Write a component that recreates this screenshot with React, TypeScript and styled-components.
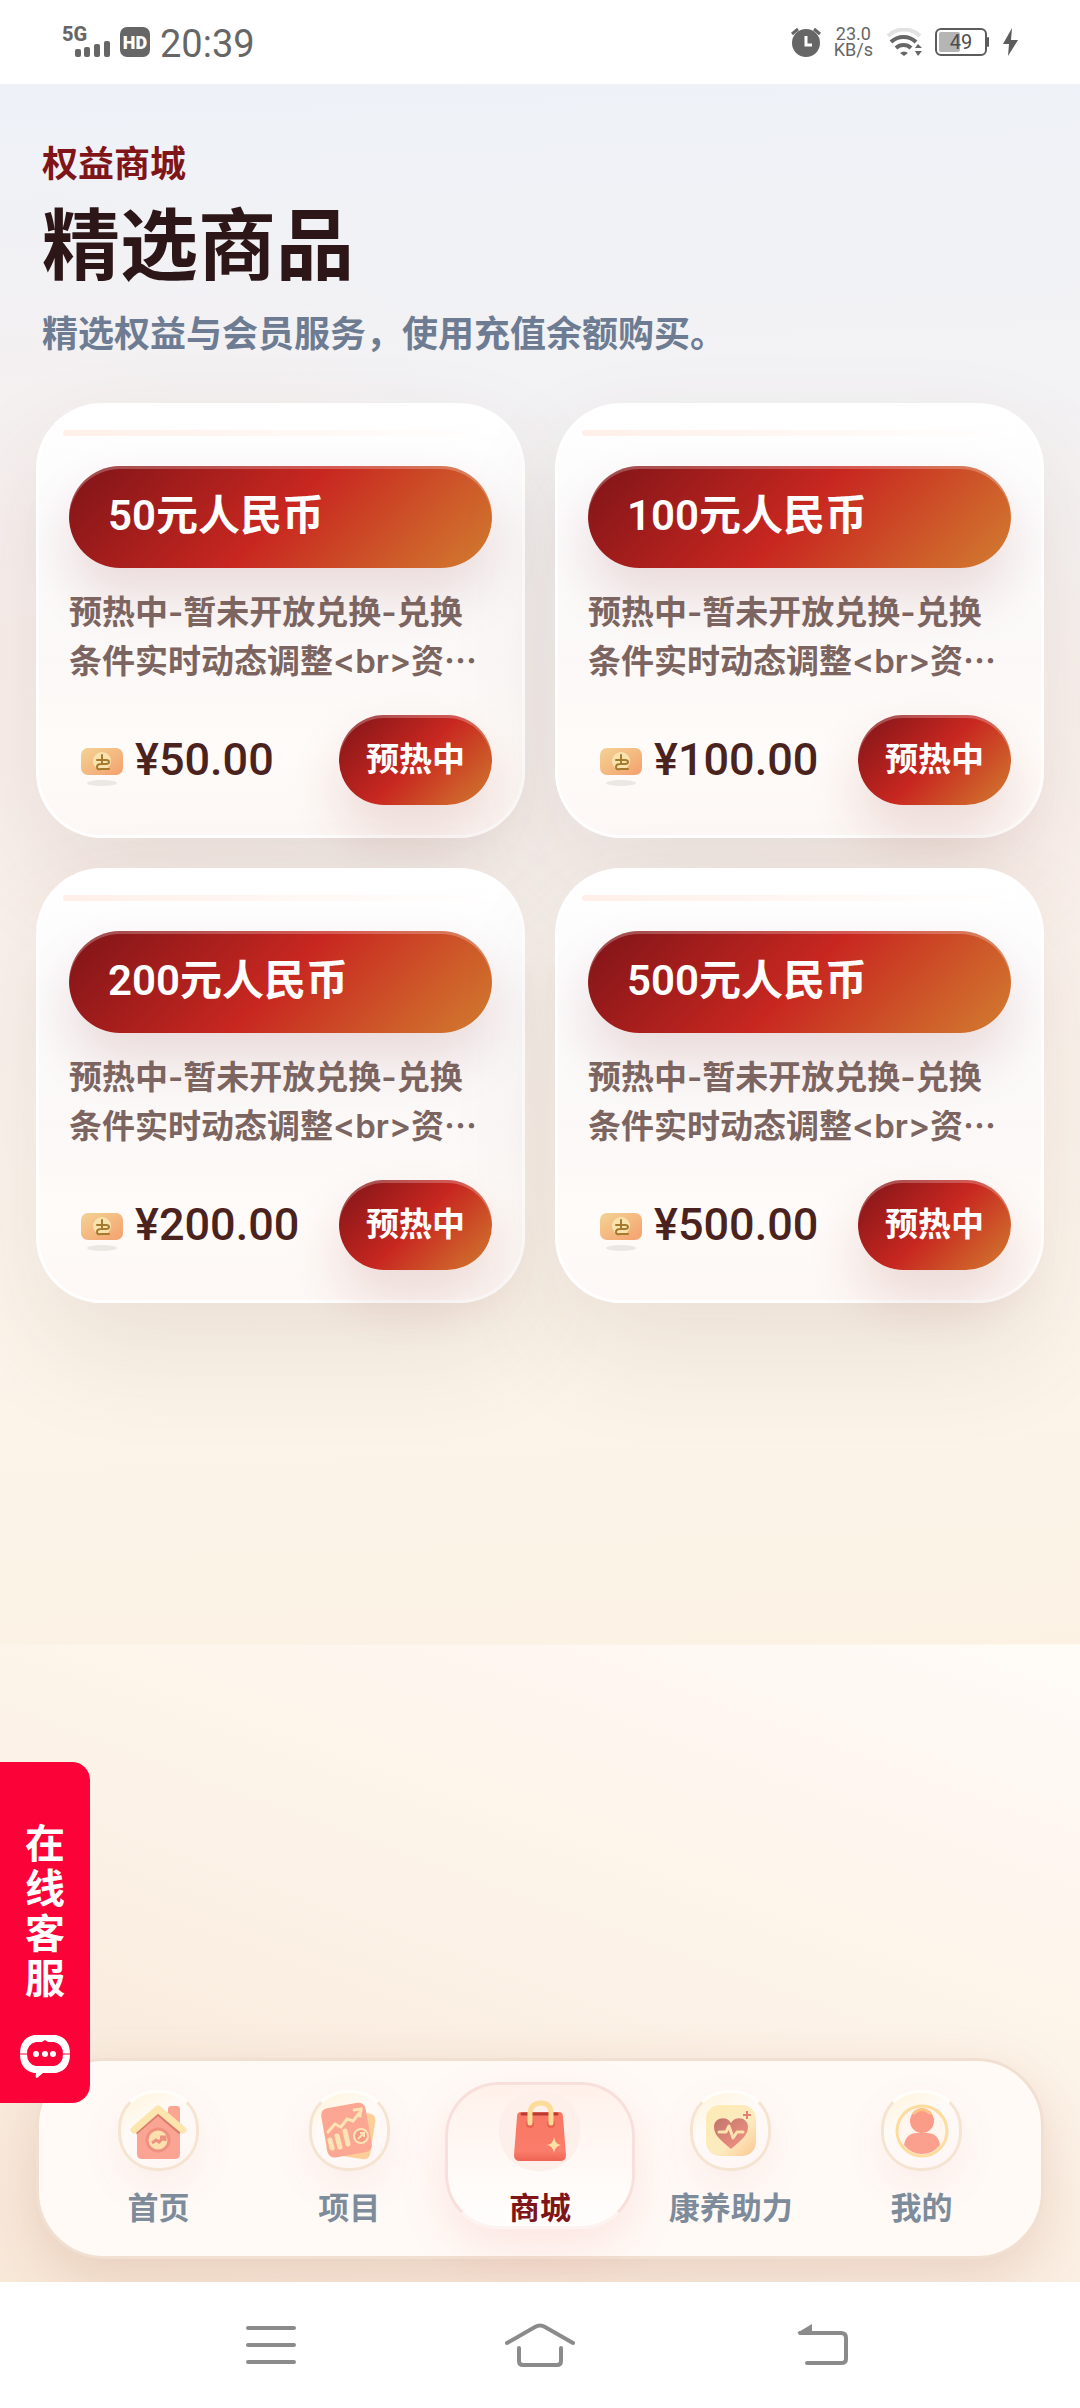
import React from 'react';
import styled, { createGlobalStyle, css } from 'styled-components';

const SANS = `Roboto, 'Noto Sans CJK SC', sans-serif`;
const BODY = `Inter, 'Noto Sans CJK SC', sans-serif`;
const CJK = `'Noto Sans CJK SC', sans-serif`;

const Global = createGlobalStyle`
  * { box-sizing: border-box; }
  body { margin: 0; background: #fff; font-family: ${SANS}; }
  h1, h2, p, ul { margin: 0; padding: 0; }
  button { font-family: inherit; border: 0; background: none; padding: 0; cursor: pointer; }
  a { text-decoration: none; }
  svg { display: block; flex: none; }
`;

const Screen = styled.div`
  min-height: 100vh;
  display: flex;
  flex-direction: column;
`;

/* ---------- status bar ---------- */

const StatusBar = styled.header`
  height: 84px;
  padding: 0 62px;
  display: flex;
  align-items: center;
  justify-content: space-between;
  color: #666;
`;

const StatusGroup = styled.div<{ $gap: number }>`
  display: flex;
  align-items: center;
  gap: ${(p) => p.$gap}px;
`;

const Clock = styled.time`
  font-size: 38px;
  line-height: 44px;
  padding-top: 4px;
`;

const NetSpeed = styled.div`
  display: flex;
  flex-direction: column;
  align-items: center;
  font-size: 18px;
  line-height: 16px;
`;

/* ---------- page ---------- */

const Main = styled.main`
  flex: 1;
  position: relative;
  display: flex;
  flex-direction: column;
  overflow: hidden;
  background:
    radial-gradient(ellipse 50% 24% at 0% 26%, rgba(255, 230, 222, 0.3), rgba(255, 230, 222, 0)) no-repeat,
    radial-gradient(ellipse 50% 20% at 100% 34%, rgba(255, 236, 228, 0.3), rgba(255, 236, 228, 0)) no-repeat,
    linear-gradient(178deg, #eef2f8 0%, #f3f2f4 20%, #f8f2ef 48%, #fcf5ec 75%, #fbf2e4 100%) top / 100% 71% no-repeat,
    linear-gradient(200deg, #fffcf8 60%, #fff6f1 68%, #fdf4e9 76%, #faede0 88%, #f8e8d8 100%);
`;

const Heading = styled.section`
  padding: 55px 42px 0;
  display: flex;
  flex-direction: column;
`;

const Eyebrow = styled.p`
  font-size: 36px;
  line-height: 52px;
  font-weight: 700;
  color: #7f1518;
`;

const Title = styled.h1`
  margin-top: 3px;
  font-size: 78px;
  line-height: 108px;
  font-weight: 700;
  color: #2c1618;
`;

const Lead = styled.p`
  font-size: 36px;
  line-height: 52px;
  margin-top: 7px;
  font-weight: 700;
  color: #6d7c92;
`;

const Goods = styled.ul`
  list-style: none;
  margin-top: 42px;
  padding: 0 36px;
  display: grid;
  grid-template-columns: 1fr 1fr;
  gap: 30px;
`;

const Card = styled.li`
  position: relative;
  padding: 60px 30px 30px;
  border: 3px solid rgba(255, 255, 255, 0.85);
  border-radius: 66px;
  background: linear-gradient(180deg, #ffffff 0%, #fcfbfc 26%, #fbf8f7 60%, #fffbf8 80%, #fdf8f5 100%);
  box-shadow: 0 48px 108px rgba(100, 60, 50, 0.11);

  &::before {
    content: '';
    position: absolute;
    top: 24px;
    left: 24px;
    right: 24px;
    height: 6px;
    border-radius: 3px;
    background: linear-gradient(90deg, #ffefe8, #fff8f4 55%, #ffffff);
  }
`;

const brandFill = css`
  background: linear-gradient(135deg, #7f1418 0%, #c82720 50%, #d27d30 100%);
  color: #fff;
  border-radius: 51px;
`;

const CardTitle = styled.h2`
  ${brandFill}
  padding: 20px 39px 22px;
  font-size: 42px;
  line-height: 60px;
  font-weight: 600;
  box-shadow: 0 27px 54px rgba(127, 20, 24, 0.14), inset 0 3px 0 rgba(255, 255, 255, 0.24);
`;

const Description = styled.p`
  margin: 20px 0 29px;
  font-family: ${BODY};
  font-size: 33px;
  line-height: 49px;
  font-weight: 600;
  color: #7c6560;
  word-break: break-all;
`;

const Ellipsis = styled.span`
  font-family: ${CJK};
  line-height: 1;
`;

const CardFooter = styled.div`
  display: flex;
  align-items: center;
  justify-content: space-between;
`;

const Price = styled.div`
  display: flex;
  align-items: center;
  gap: 12px;
  padding-left: 12px;
  font-size: 45px;
  line-height: 54px;
  font-weight: 500;
  color: #4a231f;
`;

const Buy = styled.button`
  ${brandFill}
  height: 90px;
  padding: 0 27px;
  border-radius: 45px;
  font-size: 33px;
  line-height: 48px;
  font-weight: 700;
  box-shadow: 0 27px 54px rgba(127, 20, 24, 0.14), inset 0 3px 0 rgba(255, 255, 255, 0.24);
`;

/* ---------- floating support tab ---------- */

const Support = styled.button`
  position: absolute;
  left: 0;
  bottom: 179px;
  z-index: 2;
  width: 90px;
  padding: 60px 0 24px;
  display: flex;
  flex-direction: column;
  align-items: center;
  gap: 33px;
  border-radius: 0 18px 18px 0;
  background: #fb0239;
  color: #fff;
`;

const SupportText = styled.span`
  width: 40px;
  font-size: 40px;
  line-height: 45px;
  font-weight: 700;
  word-break: break-all;
`;

/* ---------- tab bar ---------- */

const TabBar = styled.nav`
  margin: auto 36px 23px;
  padding: 21px 24px 27px;
  display: grid;
  grid-template-columns: repeat(5, 1fr);
  border: 3px solid #f1e0d1;
  border-radius: 68px;
  background: #fffaf6;
  box-shadow: 0 18px 54px rgba(150, 60, 40, 0.16);
`;

const Tab = styled.a<{ $active?: boolean }>`
  height: 147px;
  padding-top: 5px;
  display: flex;
  flex-direction: column;
  align-items: center;
  gap: 21px;
  border: 3px solid transparent;
  border-radius: 54px;
  font-size: 31px;
  line-height: 34px;
  font-weight: 700;
  white-space: nowrap;
  color: #7d8b9b;
  ${(p) =>
    p.$active &&
    css`
      color: #7f1518;
      border-color: #f8dfdb;
      border-bottom-color: #fdf3f0;
      background: linear-gradient(180deg, #fff1ea, #fffaf7 60%, #fffefd);
      box-shadow: 0 18px 48px rgba(230, 90, 90, 0.13);
    `}
`;

const TabIcon = styled.span<{ $active?: boolean }>`
  width: 81px;
  height: 81px;
  flex: none;
  display: grid;
  place-items: center;
  border-radius: 38px;
  ${(p) =>
    p.$active
      ? css`
          background: #fdefea;
        `
      : css`
          border: 3px solid #f4e4d1;
          border-top-color: #fffdfa;
          background: linear-gradient(150deg, #fff5d8 0%, #fefaf8 38%, #fdf5f3 100%);
          box-shadow: 0 15px 42px rgba(200, 80, 90, 0.08);
        `}
`;

/* ---------- system navigation ---------- */

const SystemNav = styled.footer`
  height: 126px;
  padding: 0 230px;
  display: flex;
  align-items: center;
  justify-content: space-between;
`;

const SystemButton = styled.button`
  width: 82px;
  height: 80px;
  display: grid;
  place-items: center;
`;

/* ---------- drawings ---------- */

const SignalIcon = () => (
  <svg width="48" height="46" viewBox="0 -8 48 46" fill="#666">
    <text x="0" y="14" fontFamily="Roboto, sans-serif" fontWeight="800" fontSize="20">5G</text>
    <rect x="13" y="22" width="6" height="8" rx="2" />
    <rect x="22" y="20" width="6" height="10" rx="2" />
    <rect x="32" y="17" width="6" height="13" rx="2" />
    <rect x="42" y="14" width="6" height="16" rx="2" />
  </svg>
);

const HdIcon = () => (
  <svg width="30" height="30" viewBox="0 0 30 30">
    <rect width="30" height="30" rx="7" fill="#666" />
    <text x="15" y="22" textAnchor="middle" fontFamily="Roboto, sans-serif" fontWeight="900" fontSize="18" fill="#fff">HD</text>
  </svg>
);

const AlarmIcon = () => (
  <svg width="30" height="30" viewBox="0 0 30 30">
    <circle cx="15" cy="16" r="14" fill="#666" />
    <path d="M1 7l6-5M29 7l-6-5" stroke="#666" strokeWidth="3" fill="none" />
    <path d="M15 9v9h6" stroke="#fff" strokeWidth="3" fill="none" />
  </svg>
);

const WifiIcon = () => (
  <svg width="36" height="28" viewBox="0 0 36 28" fill="none" strokeWidth="4">
    <path d="M2 8a23 23 0 0 1 32 0" stroke="#e2e2e2" />
    <path d="M5 14a18 18 0 0 1 25 0" stroke="#666" />
    <path d="M10 20a11 11 0 0 1 15 0" stroke="#666" />
    <path d="M14 25q4-3 8 0l-4 3z" fill="#666" />
    <path d="M29 20l3-4 4 4zM29 23h7l-4 5z" fill="#666" />
  </svg>
);

const BatteryIcon = () => (
  <svg width="55" height="28" viewBox="0 0 55 28">
    <rect x="1" y="1" width="50" height="26" rx="5" fill="none" stroke="#5c5c5c" strokeWidth="2" />
    <rect x="4" y="4" width="21" height="20" rx="2" fill="#b5b5b5" />
    <rect x="52" y="9" width="2" height="10" rx="1" fill="#5c5c5c" />
    <text x="26" y="21" textAnchor="middle" fontFamily="Roboto, sans-serif" fontSize="20" fill="#4c4c4c">49</text>
  </svg>
);

const BoltIcon = () => (
  <svg width="15" height="28" viewBox="0 0 15 28">
    <path d="M9 0L0 16h6L5 28l10-16H8z" fill="#5c5c5c" />
  </svg>
);

const CoinIcon = () => (
  <svg width="42" height="54" viewBox="0 0 42 54">
    <defs>
      <linearGradient id="note" x1="0" y1="0" x2="1" y2="1">
        <stop offset="0" stopColor="#f3d394" />
        <stop offset="1" stopColor="#f5a06e" />
      </linearGradient>
    </defs>
    <ellipse cx="21" cy="50" rx="15" ry="3" fill="#ebe7e3" />
    <rect x="0" y="15" width="42" height="27" rx="7" fill="url(#note)" />
    <circle cx="21" cy="28" r="9" fill="#f8e3ae" />
    <path d="M16 27h9q3 0 3 2t-3 2h-5q-4 0-4 3t4 2h8M21 22v9" fill="none" stroke="#a5792e" strokeWidth="2" strokeLinecap="round" strokeLinejoin="round" />
  </svg>
);

const ChatIcon = () => (
  <svg width="52" height="44" viewBox="0 0 52 44">
    <path d="M15 0h22q14 3 14 19 0 16-14 19H24l-6 5q-2 0-1-5h-2Q1 35 1 19 1 3 15 0z" fill="#fff" />
    <path d="M17 7h6l3-2 3 2h6q9 2 9 12t-9 12H17Q8 29 8 19T17 7z" fill="#fb0239" />
    <path d="M0 19h8M44 19h8" stroke="#fb0239" strokeWidth="1" />
    <circle cx="17" cy="19" r="3" fill="#fff" />
    <circle cx="26" cy="19" r="3" fill="#fff" />
    <circle cx="34" cy="19" r="3" fill="#fff" />
  </svg>
);

const HomeIcon = () => (
  <svg width="60" height="60" viewBox="0 0 60 60">
    <rect x="40" y="5" width="12" height="22" rx="3" fill="#fca592" />
    <path d="M9 29L30 9l22 20v24q0 5-5 5H14q-5 0-5-5z" fill="#fba494" />
    <path d="M8 32L30 13l22 19" fill="none" stroke="#d97d6c" strokeWidth="3" strokeLinejoin="round" />
    <path d="M6 29L30 8l25 21" fill="none" stroke="#fde5ae" strokeWidth="7" strokeLinecap="round" strokeLinejoin="round" />
    <circle cx="30" cy="39" r="11" fill="#fde0ad" stroke="#ee9180" strokeWidth="3" />
    <path d="M24 42l4-3 3 2 5-5M32 36h5v4" fill="none" stroke="#ee9180" strokeWidth="3" />
  </svg>
);

const ProjectIcon = () => (
  <svg width="60" height="62" viewBox="0 0 60 62">
    <rect x="10" y="11" width="44" height="46" rx="6" fill="#fdcf98" transform="rotate(9 32 34)" />
    <rect x="5" y="5" width="45" height="50" rx="7" fill="#fca793" transform="rotate(-10 28 30)" />
    <path d="M9 32l7-8 6 3 6-8 6 2 8-10M35 10l7-1-1 7" fill="none" stroke="#fde4b4" strokeWidth="3" strokeLinecap="round" />
    <path d="M11 40l2 8M18 36l3 11M26 31l3 13" stroke="#fde4b4" strokeWidth="5" strokeLinecap="round" />
    <circle cx="42" cy="36" r="7" fill="#f59a85" stroke="#fde4b4" strokeWidth="2" />
    <path d="M39 39l5-5M41 33h4v4" fill="none" stroke="#fde4b4" strokeWidth="2" />
  </svg>
);

const BagIcon = () => (
  <svg width="54" height="62" viewBox="0 0 54 62">
    <defs>
      <linearGradient id="bag" x1="0" y1="0" x2="0" y2="1">
        <stop offset="0" stopColor="#f97664" />
        <stop offset="0.8" stopColor="#fb7d6b" />
        <stop offset="1" stopColor="#ee6253" />
      </linearGradient>
    </defs>
    <path d="M8 12h38q4 0 4 5l3 38q0 6-6 6H7q-6 0-6-6l3-38q0-5 4-5z" fill="url(#bag)" />
    <path d="M9 14h35" stroke="#b83b34" strokeWidth="3" strokeLinecap="round" />
    <circle cx="17" cy="24" r="4" fill="#e9604f" />
    <circle cx="38" cy="24" r="4" fill="#e9604f" />
    <path d="M17 23V13q1-10 11-10t10 10v10" fill="none" stroke="#fbdc98" strokeWidth="5" strokeLinecap="round" />
    <path d="M41 37q1 7 7 8-6 1-7 8-1-7-7-8 6-1 7-8z" fill="#fde0a4" />
  </svg>
);

const HealthIcon = () => (
  <svg width="54" height="54" viewBox="0 0 54 54">
    <defs>
      <linearGradient id="tile" x1="0" y1="0" x2="1" y2="1">
        <stop offset="0" stopColor="#fdeab4" />
        <stop offset="0.6" stopColor="#fcebbf" />
        <stop offset="1" stopColor="#fdc692" />
      </linearGradient>
      <linearGradient id="heart" x1="0" y1="0" x2="1" y2="1">
        <stop offset="0" stopColor="#c0756b" />
        <stop offset="1" stopColor="#f79486" />
      </linearGradient>
    </defs>
    <rect x="2" y="1" width="50" height="51" rx="14" fill="url(#tile)" />
    <path d="M27 45C15 35 10 30 10 23c0-9 12-12 17-4 5-8 17-5 17 4 0 7-5 12-17 22z" fill="url(#heart)" />
    <path d="M15 28h7l3-6 4 12 4-6h6" fill="none" stroke="#fde3ae" strokeWidth="3" strokeLinecap="round" strokeLinejoin="round" />
    <path d="M43 7v8M39 11h8" stroke="#e08174" strokeWidth="2" />
  </svg>
);

const ProfileIcon = () => (
  <svg width="54" height="54" viewBox="0 0 54 54">
    <circle cx="27" cy="27" r="25" fill="#fff7ef" stroke="#fddc9e" strokeWidth="3" />
    <path d="M9 41q2-12 13-12h10q11 0 13 12-7 9-18 9T9 41z" fill="#fb9f8e" />
    <circle cx="27" cy="17" r="12" fill="#fb9c89" />
    <path d="M19 9q8-7 16 0" fill="none" stroke="#fdc287" strokeWidth="3" strokeLinecap="round" />
  </svg>
);

const MenuGlyph = () => (
  <svg width="50" height="42" viewBox="0 0 50 42" stroke="#8b8b8b" strokeWidth="4" strokeLinecap="round">
    <path d="M2 4h46M2 21h46M2 38h46" />
  </svg>
);

const HomeGlyph = () => (
  <svg width="70" height="44" viewBox="0 0 70 44" fill="none" stroke="#8b8b8b" strokeWidth="4" strokeLinecap="round">
    <path d="M2 20L30 4q5-3 10 0l28 16M14 25v13q0 4 4 4h34q4 0 4-4V25" />
  </svg>
);

const BackGlyph = () => (
  <svg width="80" height="42" viewBox="-28 0 80 42">
    <path d="M3 9h41q5 0 5 5v21q0 4-5 4H10" fill="none" stroke="#8b8b8b" strokeWidth="4" strokeLinecap="round" />
    <path d="M0 9L15 0v9z" fill="#8b8b8b" />
  </svg>
);

/* ---------- data ---------- */

const amounts = [50, 100, 200, 500];

const tabs = [
  { label: '首页', Icon: HomeIcon },
  { label: '项目', Icon: ProjectIcon },
  { label: '商城', Icon: BagIcon, active: true },
  { label: '康养助力', Icon: HealthIcon },
  { label: '我的', Icon: ProfileIcon },
];

export default function App() {
  return (
    <Screen lang="zh-CN">
      <Global />
      <StatusBar>
        <StatusGroup $gap={10}>
          <SignalIcon />
          <HdIcon />
          <Clock>20:39</Clock>
        </StatusGroup>
        <StatusGroup $gap={13}>
          <AlarmIcon />
          <NetSpeed>
            <span>23.0</span>
            <span>KB/s</span>
          </NetSpeed>
          <WifiIcon />
          <BatteryIcon />
          <BoltIcon />
        </StatusGroup>
      </StatusBar>

      <Main>
        <Heading>
          <Eyebrow>权益商城</Eyebrow>
          <Title>精选商品</Title>
          <Lead>精选权益与会员服务，使用充值余额购买。</Lead>
        </Heading>

        <Goods>
          {amounts.map((amount) => (
            <Card key={amount}>
              <CardTitle>{amount}元人民币</CardTitle>
              <Description>
                预热中-暂未开放兑换-兑换条件实时动态调整&lt;br&gt;资<Ellipsis>…</Ellipsis>
              </Description>
              <CardFooter>
                <Price>
                  <CoinIcon />
                  <span>¥{amount.toFixed(2)}</span>
                </Price>
                <Buy type="button">预热中</Buy>
              </CardFooter>
            </Card>
          ))}
        </Goods>

        <Support type="button">
          <SupportText>在线客服</SupportText>
          <ChatIcon />
        </Support>

        <TabBar>
          {tabs.map(({ label, Icon, active }) => (
            <Tab key={label} href="#" $active={active} aria-current={active ? 'page' : undefined}>
              <TabIcon $active={active}>
                <Icon />
              </TabIcon>
              {label}
            </Tab>
          ))}
        </TabBar>
      </Main>

      <SystemNav>
        <SystemButton type="button" aria-label="菜单">
          <MenuGlyph />
        </SystemButton>
        <SystemButton type="button" aria-label="主屏幕">
          <HomeGlyph />
        </SystemButton>
        <SystemButton type="button" aria-label="返回">
          <BackGlyph />
        </SystemButton>
      </SystemNav>
    </Screen>
  );
}
